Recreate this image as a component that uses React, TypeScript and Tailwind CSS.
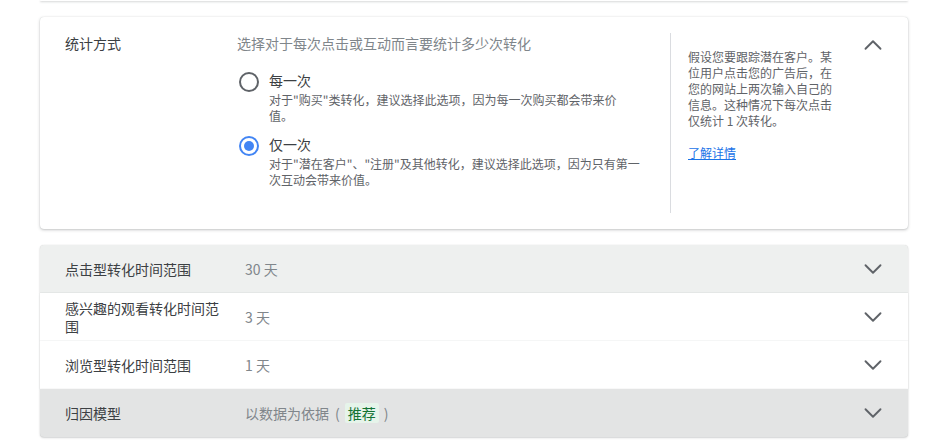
import { ChevronDown, ChevronUp } from 'lucide-react';

const font = { fontFamily: '"Noto Sans CJK SC", "Noto Sans", sans-serif' };

function Radio({ checked, label, desc, width }: { checked: boolean; label: string; desc: string; width: string }) {
  return (
    <div className="flex gap-[10px]">
      <div
        className={`mt-[4px] flex h-[20px] w-[20px] shrink-0 items-center justify-center rounded-full border-2 ${
          checked ? 'border-[#4285f4]' : 'border-[#5f6368]'
        }`}
      >
        {checked && <div className="h-[10px] w-[10px] rounded-full bg-[#4285f4]" />}
      </div>
      <div className={width}>
        <div className="text-[14px] leading-[24px] text-[#3c4043]">{label}</div>
        <div className="text-[12px] leading-[16px] text-[#5f6368]">{desc}</div>
      </div>
    </div>
  );
}

interface RowProps {
  label: string;
  value: string;
  bg: string;
  rounded: string;
  chip?: boolean;
}

function Row({ label, value, bg, rounded, chip }: RowProps) {
  return (
    <div
      className={`flex h-[48px] items-center pl-[25px] pr-[20px] shadow-[0_1px_2px_rgba(60,64,67,0.22),0_0_1px_rgba(60,64,67,0.2)] ${bg} ${rounded}`}
    >
      <div className="w-[164px] text-[14px] leading-[18px] text-[#3c4043]">{label}</div>
      <div className="ml-[16px] flex flex-1 items-center text-[14px] text-[#80868b]">
        {value}
        {chip && (
          <>
            <span className="ml-[6px]">(</span>
            <span className="mx-[5px] rounded-[2px] bg-[#e6f4ea] px-[3px] leading-[20px] text-[#137333]">推荐</span>
            <span>)</span>
          </>
        )}
      </div>
      <ChevronDown size={30} strokeWidth={1.5} className="text-[#5f6368]" />
    </div>
  );
}

export default function App() {
  return (
    <div className="min-h-[440px] w-[926px] bg-white" style={font}>
      <div className="ml-[40px] h-[1px] w-[868px] rounded-b-[4px] shadow-[0_1px_2px_rgba(60,64,67,0.3)]" />

      {/* 统计方式 */}
      <div className="ml-[40px] mt-[16px] flex w-[868px] rounded-[4px] py-[16px] pl-[25px] pr-[20px] shadow-[0_1px_3px_rgba(60,64,67,0.3),0_0_1px_rgba(60,64,67,0.2)]">
        <div className="w-[172px] text-[14px] leading-[20px] text-[#3c4043]">统计方式</div>
        <div className="h-[180px] w-[434px] border-r border-[#dadce0]">
          <div className="text-[14px] leading-[20px] text-[#80868b]">选择对于每次点击或互动而言要统计多少次转化</div>
          <div className="mt-[15px] flex flex-col gap-[8px] pl-[2px]">
            <Radio
              checked={false}
              width="w-[356px]"
              label="每一次"
              desc={'对于"购买"类转化，建议选择此选项，因为每一次购买都会带来价值。'}
            />
            <Radio
              checked
              width="w-[376px]"
              label="仅一次"
              desc={'对于"潜在客户"、"注册"及其他转化，建议选择此选项，因为只有第一次互动会带来价值。'}
            />
          </div>
        </div>
        <div className="flex flex-1">
          <div className="ml-[17px] w-[148px] pt-[16px] text-[12px] leading-[16px] text-[#5f6368]">
            <p>假设您要跟踪潜在客户。某位用户点击您的广告后，在您的网站上两次输入自己的信息。这种情况下每次点击仅统计 1 次转化。</p>
            <a href="#" className="mt-[16px] inline-block text-[#1a73e8] underline">
              了解详情
            </a>
          </div>
          <div className="ml-auto -mt-[3px]">
            <ChevronUp size={30} strokeWidth={1.5} className="text-[#5f6368]" />
          </div>
        </div>
      </div>

      <div className="ml-[40px] mt-[16px] flex w-[868px] flex-col">
        <Row label="点击型转化时间范围" value="30 天" bg="bg-[#eef0ef]" rounded="rounded-t-[4px]" />
        <Row label="感兴趣的观看转化时间范围" value="3 天" bg="bg-white" rounded="" />
        <Row label="浏览型转化时间范围" value="1 天" bg="bg-white" rounded="" />
        <Row label="归因模型" value="以数据为依据" bg="bg-[#e3e4e4]" rounded="rounded-b-[4px]" chip />
      </div>
    </div>
  );
}
